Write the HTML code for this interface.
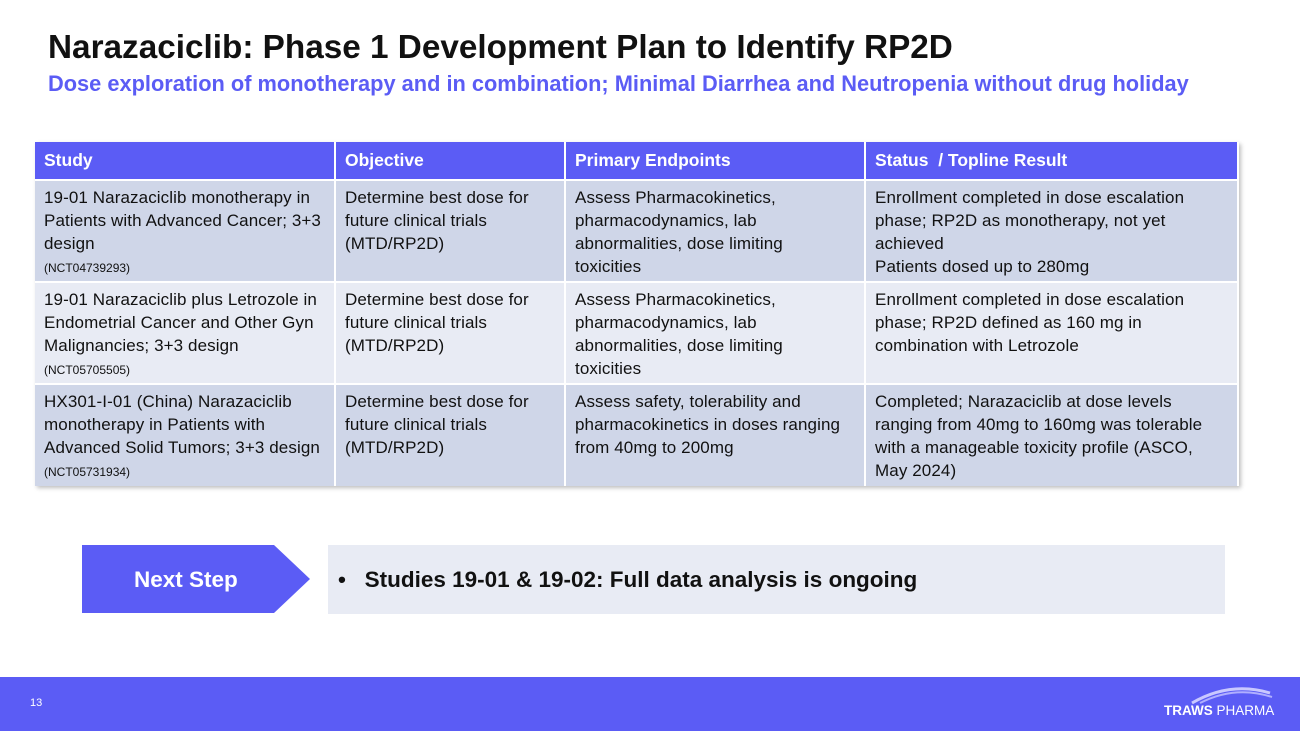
<!DOCTYPE html>
<html><head><meta charset="utf-8"><style>
*{margin:0;padding:0;box-sizing:border-box}
body{width:1300px;height:731px;background:#fff;position:relative;overflow:hidden;font-family:"Liberation Sans",sans-serif}
h1{position:absolute;left:48px;top:29px;font-size:33.3px;font-weight:bold;color:#111;white-space:nowrap}
h2{position:absolute;left:48px;top:71px;font-size:21.8px;font-weight:bold;color:#5b5cf5;white-space:nowrap}
table{position:absolute;left:35px;top:142px;width:1204px;border-collapse:collapse;box-shadow:2px 2px 4px rgba(0,0,0,.25);table-layout:fixed}
th{background:#5b5cf5;color:#fff;text-align:left;font-size:17.5px;height:38px;padding:0 9px;border-right:2px solid #fff}
td{vertical-align:top;font-size:17px;line-height:23px;color:#111;padding:5px 9px 0;border-right:2px solid #fff;border-top:2px solid #fff;white-space:nowrap;letter-spacing:0.1px}
tr.a td{background:#cfd6e8;height:102px}
tr.b td{background:#e8ebf4;height:102px}
small{font-size:12px;letter-spacing:0}
.arrow{position:absolute;left:82px;top:545px;width:228px;height:68px;background:#5b5cf5;clip-path:polygon(0 0,192px 0,228px 34px,192px 68px,0 68px);color:#fff;font-weight:bold;font-size:22.5px;line-height:70px;padding-left:52px}
.box{position:absolute;left:328px;top:545px;width:897px;height:69px;background:#e8ebf4;font-weight:bold;font-size:22.5px;line-height:70px;padding-left:10px;color:#111;white-space:nowrap}
.foot{position:absolute;left:0;top:677px;width:1300px;height:54px;background:#5b5cf5}
.pg{position:absolute;left:30px;top:20px;color:#fff;font-size:11px}
.logo{position:absolute;left:1164px;top:26px;color:#fff;font-size:13.5px}
</style></head><body>
<h1>Narazaciclib: Phase 1 Development Plan to Identify RP2D</h1>
<h2>Dose exploration of monotherapy and in combination; Minimal Diarrhea and Neutropenia without drug holiday</h2>
<table>
<tr><th style="width:300px">Study</th><th style="width:230px">Objective</th><th style="width:300px">Primary Endpoints</th><th>Status &nbsp;/ Topline Result</th></tr>
<tr class="a"><td>19-01 Narazaciclib monotherapy in<br>Patients with Advanced Cancer; 3+3<br>design<br><small>(NCT04739293)</small></td><td>Determine best dose for<br>future clinical trials<br>(MTD/RP2D)</td><td>Assess Pharmacokinetics,<br>pharmacodynamics, lab<br>abnormalities, dose limiting<br>toxicities</td><td>Enrollment completed in dose escalation<br>phase; RP2D as monotherapy, not yet<br>achieved<br>Patients dosed up to 280mg</td></tr>
<tr class="b"><td>19-01 Narazaciclib plus Letrozole in<br>Endometrial Cancer and Other Gyn<br>Malignancies; 3+3 design<br><small>(NCT05705505)</small></td><td>Determine best dose for<br>future clinical trials<br>(MTD/RP2D)</td><td>Assess Pharmacokinetics,<br>pharmacodynamics, lab<br>abnormalities, dose limiting<br>toxicities</td><td>Enrollment completed in dose escalation<br>phase; RP2D defined as 160 mg in<br>combination with Letrozole</td></tr>
<tr class="a"><td>HX301-I-01 (China) Narazaciclib<br>monotherapy in Patients with<br>Advanced Solid Tumors; 3+3 design<br><small>(NCT05731934)</small></td><td>Determine best dose for<br>future clinical trials<br>(MTD/RP2D)</td><td>Assess safety, tolerability and<br>pharmacokinetics in doses ranging<br>from 40mg to 200mg</td><td>Completed; Narazaciclib at dose levels<br>ranging from 40mg to 160mg was tolerable<br>with a manageable toxicity profile (ASCO,<br>May 2024)</td></tr>
</table>
<div class="arrow">Next Step</div>
<div class="box">•&nbsp;&nbsp; Studies 19-01 &amp; 19-02: Full data analysis is ongoing</div>
<div class="foot"><div class="pg">13</div>
<svg style="position:absolute;left:1190px;top:6px" width="85" height="22"><path d="M2 20 Q40 -2 80 10" stroke="#c9c8ff" stroke-width="3" fill="none"/><path d="M10 20 Q45 2 82 14" stroke="#b0afff" stroke-width="2" fill="none"/></svg>
<div class="logo"><b>TRAWS</b> PHARMA</div></div>
</body></html>
